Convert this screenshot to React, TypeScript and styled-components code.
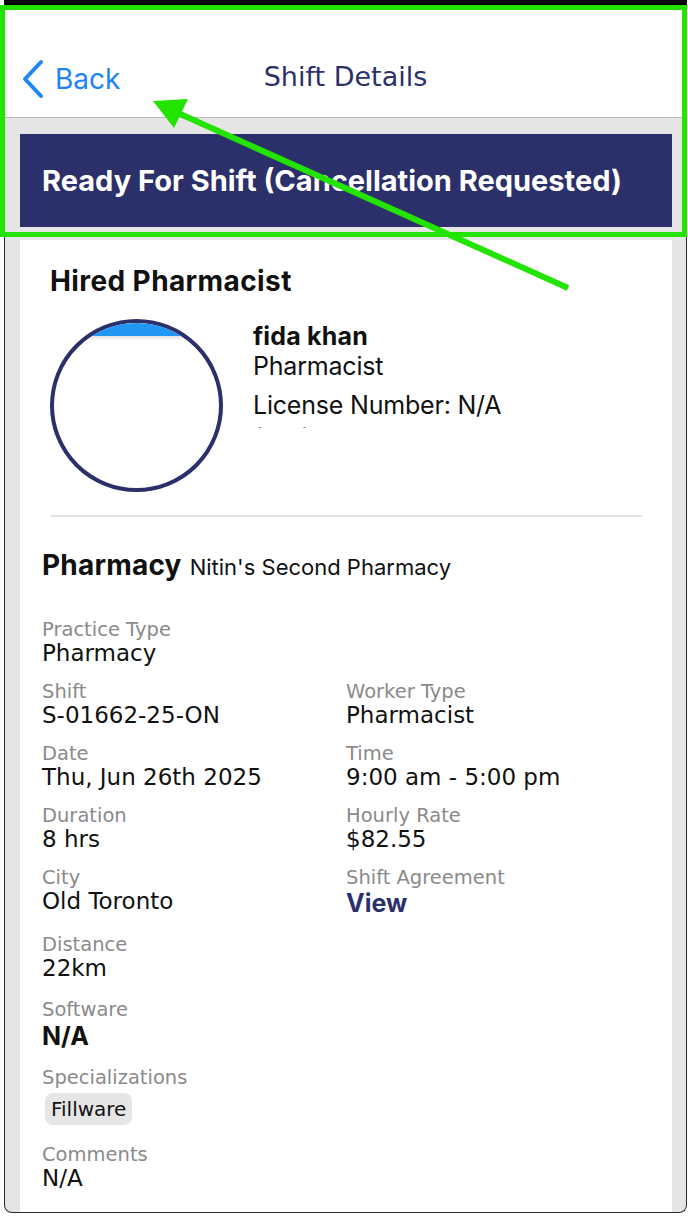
import React from "react";
import styled, { createGlobalStyle } from "styled-components";

const SF = `"Inter", "Roboto", "Liberation Sans", sans-serif`;
const GEO = `"DejaVu Sans", "Noto Sans", "Liberation Sans", sans-serif`;
const NAVY = "#2b306b";

const GlobalStyle = createGlobalStyle`
  html, body { margin: 0; padding: 0; background: #ffffff; }
  #root { width: 688px; height: 1216px; }
  * { box-sizing: border-box; }
`;

const Screen = styled.div`
  position: relative;
  width: 688px;
  height: 1216px;
  overflow: hidden;
  background: #ffffff;
  padding-left: 4px;
`;

const Frame = styled.div`
  width: 683px;
  height: 1213px;
  border-top: 5px solid #000;
  border-left: 1px solid #2a2a2a;
  border-right: 1px solid #2a2a2a;
  border-bottom: 1px solid #2a2a2a;
  border-radius: 0 0 8px 8px;
  background: #e5e5e5;
  overflow: hidden;
  display: flex;
  flex-direction: column;
`;

const Header = styled.header`
  height: 113px;
  background: #ffffff;
  border-bottom: 1px solid #b9b9b9;
  display: grid;
  grid-template-columns: 1fr auto 1fr;
  align-items: center;
  padding: 32px 0 0 0;
`;

const BackButton = styled.div`
  display: flex;
  align-items: center;
  gap: 11px;
  padding-left: 17px;
  color: #1d86f4;
  font-family: ${SF};
  font-size: 28px;
  line-height: 34px;
  margin-top: 4px;
`;

const Title = styled.h1`
  margin: 0;
  font-family: ${GEO};
  font-weight: 400;
  font-size: 27px;
  color: ${NAVY};
  line-height: 34px;
`;

const Content = styled.main`
  flex: 1;
  display: flex;
  flex-direction: column;
  padding: 16px 14px 0 15px;
  gap: 13px;
`;

const Banner = styled.div`
  height: 93px;
  background: ${NAVY};
  display: flex;
  align-items: center;
  padding-left: 22px;
  color: #ffffff;
  font-family: ${SF};
  font-weight: 700;
  font-size: 29px;
`;

const Card = styled.section`
  flex: 1;
  background: #ffffff;
  display: flex;
  flex-direction: column;
`;

const HiredSection = styled.div`
  padding: 24px 30px 0 30px;
`;

const SectionTitle = styled.h2`
  margin: 0;
  font-family: ${SF};
  font-weight: 700;
  font-size: 28px;
  line-height: 34px;
  color: #111;
  letter-spacing: 0.4px;
`;

const Profile = styled.div`
  display: flex;
  gap: 30px;
  margin-top: 21px;
`;

const Avatar = styled.div`
  width: 173px;
  height: 173px;
  flex: none;
  border-radius: 50%;
  border: 4px solid ${NAVY};
  overflow: hidden;
  background: #ffffff;
`;

const AvatarCap = styled.div`
  height: 13px;
  background: #2196f3;
  box-shadow: 0 2px 4px rgba(0, 0, 0, 0.14);
`;

const Info = styled.div`
  height: 109px;
  overflow: hidden;
  display: flex;
  flex-direction: column;
  font-family: ${SF};
  color: #111;
  padding-top: 2px;
`;

const Name = styled.div`
  font-weight: 700;
  font-size: 25px;
  line-height: 30px;
  letter-spacing: 0.2px;
`;

const InfoLine = styled.div<{ $top?: number }>`
  font-size: 25px;
  line-height: 30px;
  margin-top: ${(p) => p.$top ?? 0}px;
  letter-spacing: -0.2px;
`;

const Phone = styled.div`
  font-size: 25px;
  line-height: 30px;
  color: #5561b5;
  margin-top: 4px;
`;

const Divider = styled.hr`
  margin: 23px 30px 0 30px;
  border: none;
  border-top: 2px solid #e3e3e3;
`;

const Details = styled.div`
  padding: 31px 22px 0 22px;
`;

const PharmacyHeading = styled.div`
  display: flex;
  align-items: baseline;
  gap: 8px;
  font-family: ${SF};
  color: #111;
`;

const PharmacyLabel = styled.span`
  font-weight: 700;
  font-size: 28px;
  letter-spacing: 0.2px;
`;

const PharmacyName = styled.span`
  font-size: 22px;
`;

const Grid = styled.div`
  display: grid;
  grid-template-columns: 1fr 1fr;
  row-gap: 15px;
  margin-top: 37px;
`;

const Field = styled.div<{ $full?: boolean; $top?: number }>`
  display: flex;
  flex-direction: column;
  align-items: flex-start;
  grid-column: ${(p) => (p.$full ? "1 / span 2" : "auto")};
  margin-top: ${(p) => p.$top ?? 0}px;
`;

const Label = styled.div`
  font-family: ${GEO};
  font-size: 19.5px;
  line-height: 21px;
  color: #8a8a8a;
`;

const Value = styled.div<{ $bold?: boolean }>`
  font-family: ${(p) => (p.$bold ? SF : GEO)};
  font-weight: ${(p) => (p.$bold ? 700 : 400)};
  font-size: ${(p) => (p.$bold ? 25 : 23)}px;
  line-height: ${(p) => (p.$bold ? 32 : 26)}px;
  color: #111;
`;

const LinkValue = styled.div`
  font-family: ${SF};
  font-weight: 700;
  font-size: 25px;
  line-height: 31px;
  color: ${NAVY};
`;

const Chip = styled.span`
  margin: 5px 0 4px 3px;
  height: 32px;
  padding: 0 6px;
  display: inline-flex;
  align-items: center;
  border-radius: 8px;
  background: #e6e6e6;
  font-family: ${GEO};
  font-size: 20px;
  color: #111;
`;

const Overlay = styled.svg`
  position: absolute;
  left: 0;
  top: 0;
  pointer-events: none;
`;

const Chevron = () => (
  <svg width="22" height="40" viewBox="0 0 22 40" fill="none">
    <polyline
      points="19,3 3,20 19,37"
      stroke="#1d86f4"
      strokeWidth="4"
      strokeLinecap="round"
      strokeLinejoin="round"
    />
  </svg>
);

type F = {
  label: string;
  value: string;
  kind?: "bold" | "link" | "chip";
  full?: boolean;
  empty?: boolean;
  top?: number;
};

const fields: F[] = [
  { label: "Practice Type", value: "Pharmacy" },
  { label: "", value: "", empty: true },
  { label: "Shift", value: "S-01662-25-ON" },
  { label: "Worker Type", value: "Pharmacist" },
  { label: "Date", value: "Thu, Jun 26th 2025" },
  { label: "Time", value: "9:00 am - 5:00 pm" },
  { label: "Duration", value: "8 hrs" },
  { label: "Hourly Rate", value: "$82.55" },
  { label: "City", value: "Old Toronto" },
  { label: "Shift Agreement", value: "View", kind: "link" },
  { label: "Distance", value: "22km", full: true },
  { label: "Software", value: "N/A", kind: "bold", full: true, top: 3 },
  { label: "Specializations", value: "Fillware", kind: "chip", full: true },
  { label: "Comments", value: "N/A", full: true },
];

export default function App() {
  return (
    <>
      <GlobalStyle />
      <Screen>
        <Frame>
          <Header>
            <BackButton>
              <Chevron />
              <span>Back</span>
            </BackButton>
            <Title>Shift Details</Title>
            <div />
          </Header>
          <Content>
            <Banner>Ready For Shift (Cancellation Requested)</Banner>
            <Card>
              <HiredSection>
                <SectionTitle>Hired Pharmacist</SectionTitle>
                <Profile>
                  <Avatar>
                    <AvatarCap />
                  </Avatar>
                  <Info>
                    <Name>fida khan</Name>
                    <InfoLine>Pharmacist</InfoLine>
                    <InfoLine $top={9}>License Number: N/A</InfoLine>
                    <Phone>(716) 000-0000</Phone>
                  </Info>
                </Profile>
              </HiredSection>
              <Divider />
              <Details>
                <PharmacyHeading>
                  <PharmacyLabel>Pharmacy</PharmacyLabel>
                  <PharmacyName>Nitin's Second Pharmacy</PharmacyName>
                </PharmacyHeading>
                <Grid>
                  {fields.map((f, i) =>
                    f.empty ? (
                      <div key={i} />
                    ) : (
                      <Field key={i} $full={f.full} $top={f.top}>
                        <Label>{f.label}</Label>
                        {f.kind === "link" ? (
                          <LinkValue>{f.value}</LinkValue>
                        ) : f.kind === "chip" ? (
                          <Chip>{f.value}</Chip>
                        ) : (
                          <Value $bold={f.kind === "bold"}>{f.value}</Value>
                        )}
                      </Field>
                    )
                  )}
                </Grid>
              </Details>
            </Card>
          </Content>
        </Frame>
        <Overlay width="688" height="1216" viewBox="0 0 688 1216">
          <rect x="2.5" y="7.5" width="682" height="227" fill="none" stroke="#22e400" strokeWidth="5" />
          <line x1="568" y1="288" x2="178" y2="113" stroke="#22e400" strokeWidth="6" />
          <polygon points="153,101 188,99 174,128" fill="#22e400" />
        </Overlay>
      </Screen>
    </>
  );
}
